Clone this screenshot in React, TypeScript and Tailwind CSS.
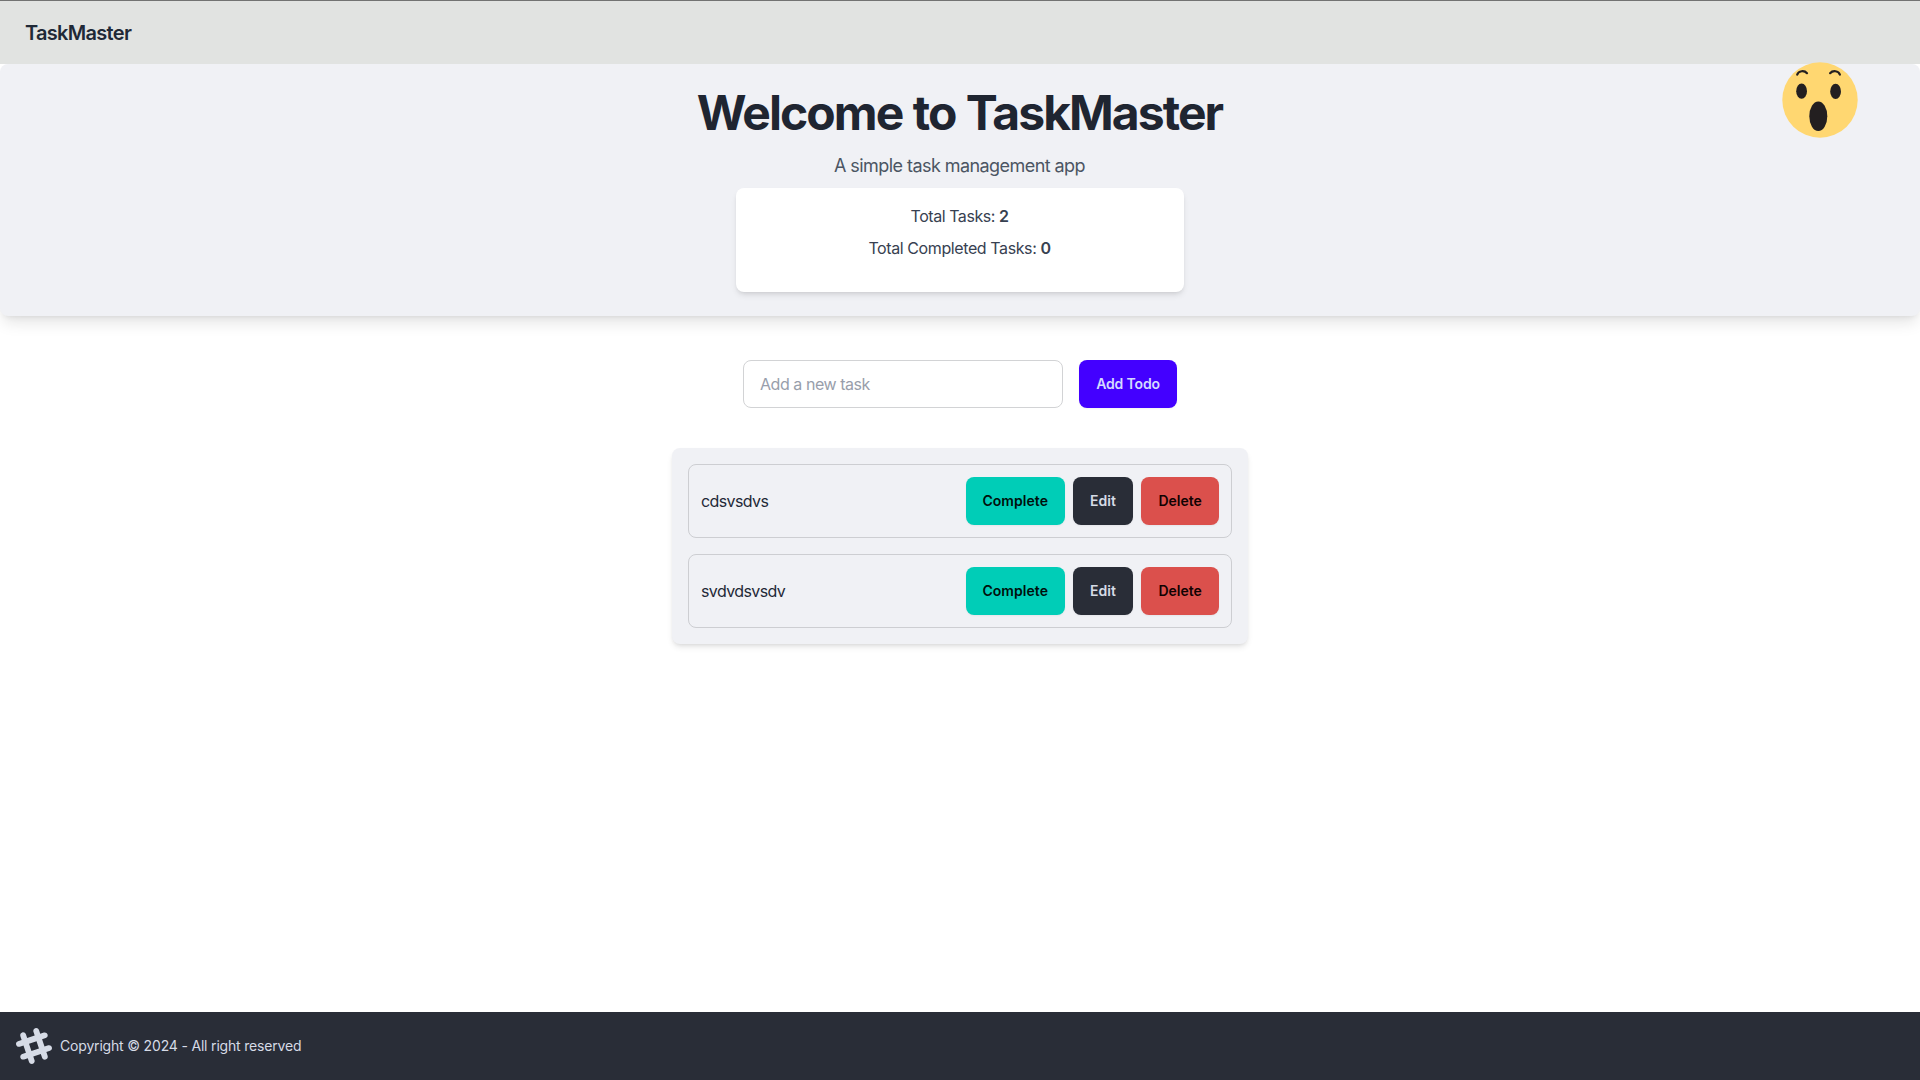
const tasks = ["cdsvsdvs", "svdvdsvsdv"];

function SurprisedFace() {
  return (
    <svg className="absolute top-[62px] left-[1782px] h-[76px] w-[76px]" viewBox="0 0 76 76">
      <circle cx="38" cy="38" r="37.7" fill="#ffd771" />
      <g fill="#231f20">
        <ellipse cx="19.6" cy="29.2" rx="5.4" ry="7.6" />
        <ellipse cx="53.6" cy="29.4" rx="5.4" ry="7.6" />
        <ellipse cx="36.3" cy="54.2" rx="9" ry="14.8" />
      </g>
      <g fill="none" stroke="#231f20" strokeWidth="2.2" strokeLinecap="round">
        <path d="M15.2 12.6C16.6 8.6 22.4 8.2 25 11.2" />
        <path d="M48.1 11.2C50.7 8.2 56.5 8.6 57.9 12.6" />
      </g>
    </svg>
  );
}

function Logo() {
  return (
    <svg width="36" height="36" viewBox="0 0 24 24" fillRule="evenodd" clipRule="evenodd" className="fill-current">
      <path d="M22.672 15.226l-2.432.811.841 2.515c.33 1.019-.209 2.127-1.23 2.456-1.15.325-2.148-.321-2.463-1.226l-.84-2.518-5.013 1.677.84 2.517c.391 1.203-.434 2.542-1.831 2.542-.88 0-1.601-.564-1.86-1.314l-.842-2.516-2.431.809c-1.135.328-2.145-.317-2.463-1.229-.329-1.018.211-2.127 1.231-2.456l2.432-.809-1.621-4.823-2.432.808c-1.355.384-2.558-.59-2.558-1.839 0-.817.509-1.582 1.327-1.846l2.433-.809-.842-2.515c-.33-1.02.211-2.129 1.232-2.458 1.02-.329 2.13.209 2.461 1.229l.842 2.515 5.011-1.677-.839-2.517c-.403-1.238.484-2.553 1.843-2.553.819 0 1.585.509 1.85 1.326l.841 2.517 2.431-.81c1.02-.33 2.131.211 2.461 1.229.332 1.018-.21 2.126-1.23 2.456l-2.433.809 1.622 4.823 2.433-.809c1.242-.401 2.557.484 2.557 1.838 0 .819-.51 1.583-1.328 1.847m-8.992-6.428l-5.01 1.675 1.619 4.828 5.011-1.674-1.62-4.829z" />
    </svg>
  );
}

function TaskRow({ name }: { name: string }) {
  return (
    <li className="flex items-center justify-between rounded-lg border border-[#cdced2] p-3">
      <span className="tracking-[-0.6px] text-[#1f2937]">{name}</span>
      <div className="flex gap-2 text-sm font-semibold">
        <button className="h-12 w-[99px] rounded-lg bg-[#00cdb7] tracking-[0.04px] text-[#00100d] shadow-xs">Complete</button>
        <button className="h-12 w-[60.6px] rounded-lg bg-[#292d37] text-[#d6dbe6] shadow-xs">Edit</button>
        <button className="h-12 w-[77.7px] rounded-lg bg-[#db504c] text-[#110202] shadow-xs">Delete</button>
      </div>
    </li>
  );
}

export default function App() {
  return (
    <div className="relative flex h-screen flex-col overflow-hidden bg-white font-['Inter',sans-serif] text-[#1f2937]">
      <header className="flex h-16 shrink-0 items-center border-t border-[#727372] bg-[#e1e3e1] px-[25px]">
        <span className="text-xl leading-7 font-semibold tracking-[-0.7px]">TaskMaster</span>
      </header>

      <section className="flex h-[252px] shrink-0 flex-col items-center rounded-lg bg-[#f0f1f5] pt-[25px] text-center shadow-lg">
        <h1 className="pr-px text-5xl leading-[48px] font-bold tracking-[-1.95px] [word-spacing:1px] text-[#1f2531]">Welcome to TaskMaster</h1>
        <p className="mt-[15px] pr-px text-lg leading-7 tracking-[-0.56px] text-[#4b5563]">A simple task management app</p>
        <div className="mt-2 h-[104px] w-md rounded-lg bg-white p-4 text-[#374151] shadow-md">
          <p className="pr-px tracking-[-0.46px]">
            Total Tasks: <span className="font-semibold">2</span>
          </p>
          <p className="mt-2 pr-px tracking-[-0.4px]">
            Total Completed Tasks: <span className="font-semibold">0</span>
          </p>
        </div>
      </section>

      <main className="flex flex-1 flex-col items-center pt-11">
        <form className="flex gap-4">
          <input
            className="h-12 w-80 rounded-lg border border-[#d2d3d5] bg-white px-4 tracking-[-0.45px] outline-none placeholder:text-[#989eab]"
            placeholder="Add a new task"
          />
          <button type="button" className="h-12 w-[98px] rounded-lg bg-[#4300ff] text-sm font-semibold tracking-[-0.15px] text-[#d3daff] shadow-xs">
            Add Todo
          </button>
        </form>
        <ul className="mt-10 flex w-xl flex-col gap-4 rounded-lg bg-[#f0f1f5] p-4 shadow-md">
          {tasks.map((task) => (
            <TaskRow key={task} name={task} />
          ))}
        </ul>
      </main>

      <footer className="flex h-[68px] shrink-0 items-center gap-2 bg-[#292d37] px-4 text-[#d6dbe6]">
        <Logo />
        <p className="text-sm tracking-[-0.18px]">Copyright © 2024 - All right reserved</p>
      </footer>

      <SurprisedFace />
    </div>
  );
}
